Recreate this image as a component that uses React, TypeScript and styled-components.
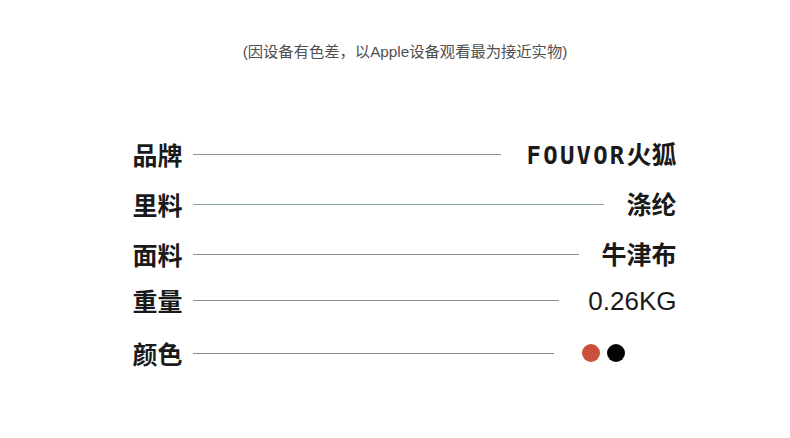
import { createGlobalStyle, styled } from 'styled-components'

const GlobalStyle = createGlobalStyle`
  html, body {
    margin: 0;
    padding: 0;
    background: #ffffff;
  }
  body {
    font-family: "Noto Sans CJK SC", "Noto Sans", sans-serif;
    color: #1a1a1a;
  }
`

const Page = styled.div`
  width: 790px;
  height: 438px;
  display: flex;
  flex-direction: column;
  align-items: center;
  overflow: hidden;
`

const Notice = styled.div`
  margin-top: 41px;
  margin-left: 20px;
  font-size: 15.3px;
  line-height: 22px;
  color: #4f4f4f;
  font-family: "Liberation Sans", "Noto Sans CJK SC", sans-serif;
`

const Specs = styled.div`
  width: 544px;
  margin-left: 19px;
  margin-top: 66px;
  display: flex;
  flex-direction: column;
`

const Row = styled.div<{ $height: number }>`
  height: ${(p) => p.$height}px;
  display: flex;
  align-items: center;
  gap: 10px;
`

const Label = styled.div`
  font-size: 25px;
  font-weight: 700;
  color: #1a1a1a;
  white-space: nowrap;
`

const Rule = styled.div<{ $tone: string; $gap: number }>`
  flex: 1;
  height: 1px;
  background: ${(p) => p.$tone};
  margin-right: ${(p) => p.$gap}px;
`

const Value = styled.div<{ $latin?: boolean }>`
  font-size: ${(p) => (p.$latin ? '26px' : '25px')};
  font-weight: ${(p) => (p.$latin ? 400 : 700)};
  font-family: ${(p) =>
    p.$latin
      ? '"Liberation Sans", Arial, sans-serif'
      : '"Noto Sans CJK SC", sans-serif'};
  color: #1a1a1a;
  white-space: nowrap;
  transform: translateY(${(p) => (p.$latin ? '1px' : '-1px')});
`

const Brand = styled.span`
  font-family: "DejaVu Sans Mono", monospace;
  font-weight: 700;
  font-size: 24px;
  letter-spacing: 2.2px;
`

const Swatches = styled.div`
  display: flex;
  gap: 7px;
  margin-right: 52px;
`

const Dot = styled.span<{ $color: string }>`
  width: 18px;
  height: 18px;
  border-radius: 50%;
  background: ${(p) => p.$color};
`

export default function App() {
  return (
    <Page>
      <GlobalStyle />
      <Notice>(因设备有色差，以Apple设备观看最为接近实物)</Notice>
      <Specs>
        <Row $height={50}>
          <Label>品牌</Label>
          <Rule $tone="#8c9494" $gap={16} />
          <Value>
            <Brand>FOUVOR</Brand>火狐
          </Value>
        </Row>
        <Row $height={50}>
          <Label>里料</Label>
          <Rule $tone="#8aa09a" $gap={12} />
          <Value>涤纶</Value>
        </Row>
        <Row $height={50}>
          <Label>面料</Label>
          <Rule $tone="#8e9292" $gap={12} />
          <Value>牛津布</Value>
        </Row>
        <Row $height={42}>
          <Label>重量</Label>
          <Rule $tone="#8e8e8e" $gap={19} />
          <Value $latin>0.26KG</Value>
        </Row>
        <Row $height={64}>
          <Label>颜色</Label>
          <Rule $tone="#888888" $gap={18} />
          <Swatches>
            <Dot $color="#c9503b" />
            <Dot $color="#050505" />
          </Swatches>
        </Row>
      </Specs>
    </Page>
  )
}
